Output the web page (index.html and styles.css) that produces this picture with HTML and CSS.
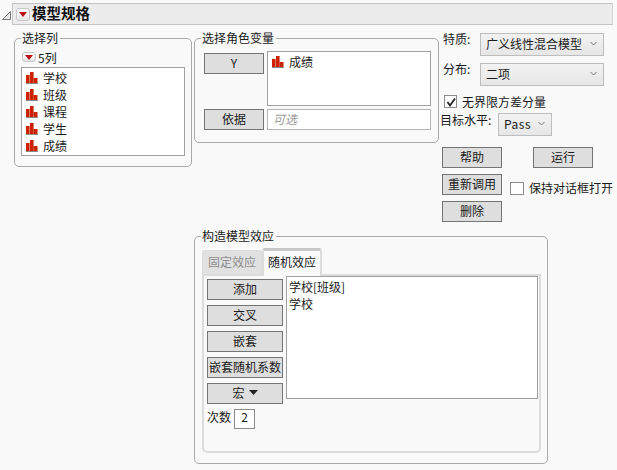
FILE: index.html
```html
<!DOCTYPE html>
<html lang="zh">
<head>
<meta charset="utf-8">
<title>模型规格</title>
<link rel="stylesheet" href="styles.css">
</head>
<body>
<svg class="defs" width="0" height="0"><defs>
<g id="bars"><rect x="0" y="3" width="3.6" height="8" fill="#cc2200"/><rect x="4" y="0" width="3.6" height="11" fill="#cc2200"/><rect x="7.6" y="6" width="3.9" height="5" fill="#cc2200"/><rect x="0" y="11" width="12" height="1" fill="#8a8a8a"/></g>
</defs></svg>
<header class="title-row">
  <svg class="disclosure" width="9" height="9" viewBox="0 0 9 9"><path d="M8.5 .5V8.5H.5Z" fill="#e8e8e8" stroke="#777"/></svg>
  <div class="title-bar">
    <span class="red-btn"><i></i></span>
    <h1>模型规格</h1>
  </div>
</header>
<main class="top">
  <section class="group cols">
    <span class="legend">选择列</span>
    <div class="count"><span class="red-btn small"><i></i></span>5列</div>
    <ul class="list col-list">
      <li><svg class="bars" width="12" height="12"><use href="#bars"/></svg>学校</li>
      <li><svg class="bars" width="12" height="12"><use href="#bars"/></svg>班级</li>
      <li><svg class="bars" width="12" height="12"><use href="#bars"/></svg>课程</li>
      <li><svg class="bars" width="12" height="12"><use href="#bars"/></svg>学生</li>
      <li><svg class="bars" width="12" height="12"><use href="#bars"/></svg>成绩</li>
    </ul>
  </section>
  <section class="group roles">
    <span class="legend">选择角色变量</span>
    <div class="role-grid">
      <button class="btn role-y">Y</button>
      <ul class="list y-list"><li><svg class="bars" width="12" height="12"><use href="#bars"/></svg>成绩</li></ul>
      <button class="btn">依据</button>
      <div class="list optional">可选</div>
    </div>
  </section>
  <aside class="options">
    <div class="field"><label>特质:</label><div class="select wide">广义线性混合模型<svg class="chev" width="7" height="5" viewBox="0 0 7 5"><path d="M.5 1 3.5 4 6.5 1" fill="none" stroke="#777"/></svg></div></div>
    <div class="field second"><label>分布:</label><div class="select wide">二项<svg class="chev" width="7" height="5" viewBox="0 0 7 5"><path d="M.5 1 3.5 4 6.5 1" fill="none" stroke="#777"/></svg></div></div>
    <div class="check-row"><span class="check on"><svg width="12" height="12" viewBox="0 0 12 12"><path d="M2.5 6 5 9.5 10 2.5" fill="none" stroke="#222" stroke-width="1.8"/></svg></span>无界限方差分量</div>
    <div class="field target"><label>目标水平:</label><div class="select narrow">Pass<svg class="chev" width="7" height="5" viewBox="0 0 7 5"><path d="M.5 1 3.5 4 6.5 1" fill="none" stroke="#777"/></svg></div></div>
    <div class="actions">
      <button class="btn">帮助</button>
      <button class="btn run">运行</button>
    </div>
    <div class="actions">
      <button class="btn">重新调用</button>
      <span class="check keep"></span><span class="keep-label">保持对话框打开</span>
    </div>
    <div class="actions">
      <button class="btn">删除</button>
    </div>
  </aside>
</main>
<section class="group effects">
  <span class="legend">构造模型效应</span>
  <div class="tabs">
    <span class="tab">固定效应</span>
    <span class="tab active">随机效应</span>
  </div>
  <div class="tab-body">
    <div class="effect-btns">
      <button class="btn">添加</button>
      <button class="btn">交叉</button>
      <button class="btn">嵌套</button>
      <button class="btn">嵌套随机系数</button>
      <button class="btn">宏 <svg class="caret" width="9" height="5" viewBox="0 0 9 5"><path d="M0 0H9L4.5 5Z" fill="#222"/></svg></button>
      <div class="degree">次数<span class="degree-box">2</span></div>
    </div>
    <ul class="list effect-list"><li>学校[班级]</li><li>学校</li></ul>
  </div>
</section>
</body>
</html>
```
FILE: styles.css
```css
* { box-sizing: border-box; }
html, body { margin: 0; padding: 0; }
body {
  width: 617px;
  height: 470px;
  overflow: hidden;
  background: #f9f9f9;
  color: #1a1a1a;
  font: 12px/17px "Noto Sans CJK SC", "Liberation Sans", sans-serif;
}
.defs { position: absolute; }
ul { list-style: none; margin: 0; padding: 0; }

.title-row { display: flex; align-items: center; height: 22px; margin: 3px 4px 0 2px; gap: 1px; }
.disclosure { flex: none; margin-top: 2px; }
.title-bar {
  flex: 1; height: 22px; display: flex; align-items: center; gap: 2px; padding-left: 3px;
  background: #ececec; border: 1px solid #c4c4c4; border-right-color: #d4d4d4;
}
h1 { margin: 0 0 2px; font-size: 14.5px; line-height: 18px; font-weight: 700; color: #111; }

.red-btn {
  flex: none; display: flex; align-items: center; justify-content: center;
  width: 14px; height: 13px; border: 1px solid #c8c8c8; border-radius: 3px;
  background: linear-gradient(#fdfdfd, #e6e6e6);
}
.red-btn i { width: 0; height: 0; border: 4.5px solid transparent; border-top: 5px solid #c00f18; border-bottom: 0; }
.red-btn.small { height: 10px; }

.top { display: flex; align-items: flex-start; padding-left: 14px; }
.group { position: relative; border: 1px solid #a9a9a9; border-radius: 5px; }
.legend { position: absolute; left: 6px; top: -9px; padding: 0 2px 0 1px; background: #f9f9f9; line-height: 15px; }

.cols { width: 178px; height: 129px; margin-top: 13px; padding: 12px 6px 0; }
.count { display: flex; align-items: center; gap: 2px; height: 16px; padding-bottom: 4px; margin-left: 1px; }
.list { background: #fff; border: 1px solid #a0a0a0; }
.list li { display: flex; align-items: center; height: 17px; }
.col-list { width: 164px; height: 89px; padding: 1px 0 0 4px; }
.bars { flex: none; margin-right: 5px; }

.roles { width: 245px; height: 105px; margin: 13px 0 0 2px; padding: 12px 7px 0 9px; }
.role-grid { display: grid; grid-template-columns: 60px 164px; column-gap: 3px; row-gap: 3px; align-items: start; }
.btn {
  display: flex; align-items: center; justify-content: center; width: 60px; height: 21px; margin: 0; padding: 0 0 2px;
  background: #dedede; border: 1px solid #747474; border-radius: 0;
  font: inherit; color: inherit;
}
.role-y { margin-top: 2px; }
.y-list { height: 55px; padding: 1px 0 0 4px; }
.optional { height: 21px; padding-left: 5px; line-height: 18px; color: #9a9a9a; font-style: italic; border-color: #b4b4b4; }

.options { width: 173px; margin-left: 1px; padding-top: 8px; }
.field { display: flex; align-items: flex-start; padding-left: 3px; }
.field label { width: 37px; line-height: 15px; margin-top: -2px; }
.field.second { margin-top: 7px; }
.select {
  position: relative; display: flex; align-items: center; height: 23px; padding: 0 0 2px 5px;
  background: linear-gradient(#f2f2f2, #e6e6e6); border: 1px solid #bdbdbd;
}
.select.wide { width: 124px; }
.select.narrow { width: 54px; margin-left: 3px; letter-spacing: .5px; padding-left: 5px; }
.chev { position: absolute; right: 6px; top: 7px; }
.check-row { display: flex; align-items: center; gap: 5px; height: 14px; margin: 8px 0 0 4px; }
.check { flex: none; display: block; width: 13px; height: 13px; background: #fff; border: 1px solid #8c8c8c; }
.check.on svg { display: block; }
.field.target { padding-left: 0; margin-top: 5px; }
.field.target label { width: 55px; margin-top: -1px; }
.actions { display: flex; align-items: flex-start; height: 21px; margin: 6px 0 0 2px; }
.field.target + .actions { margin-top: 11px; }
.run { margin-left: 31px; }
.check.keep { width: 14px; margin: 8px 0 0 8px; }
.keep-label { margin: 6px 0 0 5px; line-height: 15px; white-space: nowrap; }

.effects { width: 354px; height: 228px; margin: 14px 0 0 194px; padding: 11px 7px 0; }
.tabs { display: flex; align-items: flex-start; height: 26px; }
.tab {
  display: block; width: 60px; height: 24px; margin-top: 2px; padding-top: 2px; text-align: center;
  background: #e1e1e1; color: #8d8d8d; border: 1px solid #dcdcdc; border-bottom: 0; border-radius: 3px 3px 0 0;
}
.tab.active {
  position: relative; z-index: 1; height: 28px; margin-top: 0; padding-top: 2px; background: #f9f9f9; color: #1a1a1a;
  border: 2px solid #dcdcdc; border-top: 3px solid #c8c8c8; border-bottom: 0;
}
.tab-body {
  display: flex; align-items: flex-start; width: 339px; height: 179px; padding: 0 0 0 3px;
  border: 2px solid #dcdcdc; border-radius: 0 0 5px 5px;
}
.effect-btns { display: flex; flex-direction: column; gap: 5px; width: 76px; padding-top: 3px; }
.effect-btns .btn { width: 76px; white-space: nowrap; }
.effect-list { width: 252px; height: 123px; margin-left: 3px; padding: 1px 0 0 2px; }
.caret { margin-left: 4px; }
.degree { display: flex; align-items: flex-start; gap: 3px; height: 20px; line-height: 15px; }
.degree-box { display: block; width: 21px; height: 20px; text-align: center; line-height: 14px; background: #fff; border: 1px solid #8c8c8c; }
```
